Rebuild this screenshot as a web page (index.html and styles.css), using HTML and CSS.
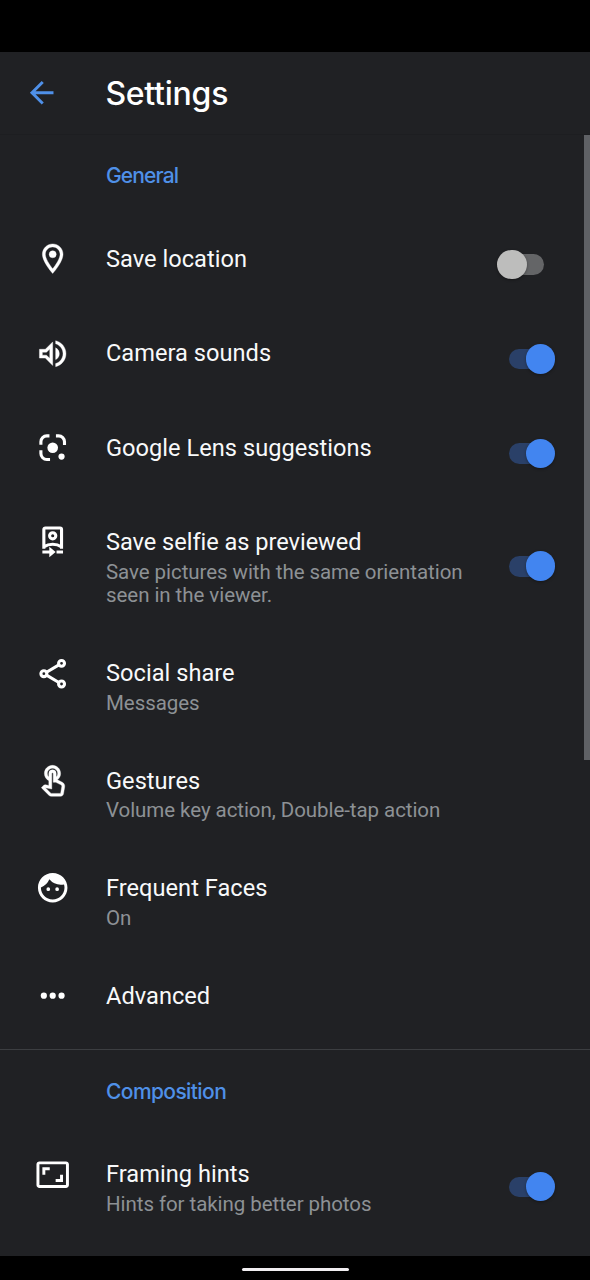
FILE: index.html
```html
<!DOCTYPE html>
<html lang="en">
<head>
<meta charset="utf-8">
<title>Settings</title>
<link rel="stylesheet" href="styles.css">
</head>
<body>
<div class="screen">
  <div class="status-bar"></div>
  <header class="app-bar">
    <svg class="icon back" viewBox="0 0 24 24"><path d="M20 11H7.83l5.59-5.59L12 4l-8 8 8 8 1.41-1.41L7.83 13H20v-2z"/></svg>
    <h1 class="page-title">Settings</h1>
  </header>
  <main class="list">
    <h2 class="category general">General</h2>
    <div class="row">
      <svg class="icon bold" viewBox="0 0 24 24"><path d="M12 2C8.13 2 5 5.13 5 9c0 5.25 7 13 7 13s7-7.75 7-13c0-3.87-3.13-7-7-7zM7 9c0-2.76 2.24-5 5-5s5 2.24 5 5c0 2.88-2.88 7.19-5 9.88C9.92 16.21 7 11.85 7 9z"/><circle cx="12" cy="9" r="2.4"/></svg>
      <div class="text"><div class="title">Save location</div></div>
      <div class="switch"></div>
    </div>
    <div class="row">
      <svg class="icon bold" viewBox="0 0 24 24"><path d="M3 9v6h4l5 5V4L7 9H3zm7-.17v6.34L7.83 13H5v-2h2.83L10 8.83zM16.5 12A4.5 4.5 0 0 0 14 7.97v8.05c1.48-.73 2.5-2.25 2.5-4.02zM14 3.23v2.06c2.89.86 5 3.54 5 6.71s-2.11 5.85-5 6.71v2.06c4.01-.91 7-4.49 7-8.77s-2.99-7.86-7-8.77z"/></svg>
      <div class="text"><div class="title">Camera sounds</div></div>
      <div class="switch on"></div>
    </div>
    <div class="row">
      <svg class="icon" viewBox="0 0 24 24"><path class="stroke" d="M9.8 4H8a4 4 0 0 0-4 4v2M14.2 4H16a4 4 0 0 1 4 4v2.2M4 13.8V16a4 4 0 0 0 4 4h2.2"/><circle cx="12" cy="12" r="3.6"/><circle cx="18" cy="18" r="2.1"/></svg>
      <div class="text"><div class="title">Google Lens suggestions</div></div>
      <div class="switch on"></div>
    </div>
    <div class="row">
      <svg class="icon" viewBox="0 0 24 24"><path class="stroke" d="M6 16.7V3.7a1 1 0 0 1 1-1h10a1 1 0 0 1 1 1v13M6.2 15.5c3.2-2.3 8.4-2.3 11.6 0"/><circle class="stroke" cx="12" cy="8" r="2.1"/><path d="M5 18h4.7v-2.6l4.3 3.6-4.3 3.6V20H5zM14.6 18H19v2h-4.4z"/></svg>
      <div class="text"><div class="title selfie">Save selfie as previewed</div><div class="sub">Save pictures with the same orientation<br>seen in the viewer.</div></div>
      <div class="switch on"></div>
    </div>
    <div class="row">
      <svg class="icon" viewBox="0 0 24 24"><path class="stroke" d="M7.8 11l8.4-5M7.8 13l8.4 5"/><g class="stroke"><circle cx="6" cy="12" r="2"/><circle cx="18" cy="5" r="2"/><circle cx="18" cy="19" r="2"/></g></svg>
      <div class="text"><div class="title">Social share</div><div class="sub">Messages</div></div>
    </div>
    <div class="row">
      <svg class="icon bold" viewBox="-0.3 -0.6 24 24"><path d="M18.19 12.44l-3.24-1.62c1.29-1 2.12-2.56 2.12-4.32 0-3.03-2.47-5.5-5.5-5.5s-5.5 2.47-5.5 5.5c0 2.13 1.22 3.98 3 4.89v3.26l-2.15-.46-.26-.02c-.53 0-1.03.21-1.41.59L4 16.18l5.09 5.09c.43.46 1.04.73 1.67.73h6.3c.98 0 1.81-.7 1.97-1.67l.8-4.71c.22-1.3-.43-2.58-1.64-3.18zm-.33 2.85l-.8 4.71h-6.3a.49.49 0 0 1-.35-.15l-3.7-3.7 4.36.92V6.5c0-.28.22-.5.5-.5s.5.22.5.5v6h1.76l3.46 1.73c.4.2.62.63.57 1.06zM8.07 6.5c0-1.93 1.57-3.5 3.5-3.5s3.5 1.57 3.5 3.5c0 .95-.38 1.81-1 2.44V6.5a2.5 2.5 0 0 0-5 0v2.44c-.62-.63-1-1.49-1-2.44z"/></svg>
      <div class="text"><div class="title">Gestures</div><div class="sub">Volume key action, Double-tap action</div></div>
    </div>
    <div class="row">
      <svg class="icon" viewBox="0 0 24 24"><path d="M10.25 13a1.25 1.25 0 1 1-2.5 0 1.25 1.25 0 0 1 2.5 0zM15 11.75a1.25 1.25 0 1 0 0 2.5 1.25 1.25 0 0 0 0-2.5zM22 12c0 5.52-4.48 10-10 10S2 17.52 2 12 6.48 2 12 2s10 4.48 10 10zm-2 0c0-.78-.12-1.53-.33-2.24-.7.15-1.42.24-2.17.24a10 10 0 0 1-7.76-3.69A10.02 10.02 0 0 1 4 11.86V12c0 4.41 3.59 8 8 8s8-3.59 8-8z"/></svg>
      <div class="text"><div class="title">Frequent Faces</div><div class="sub">On</div></div>
    </div>
    <div class="row">
      <svg class="icon" viewBox="0 0 24 24"><circle cx="6" cy="12" r="2.1"/><circle cx="12" cy="12" r="2.1"/><circle cx="18" cy="12" r="2.1"/></svg>
      <div class="text"><div class="title">Advanced</div></div>
    </div>
    <h2 class="category composition">Composition</h2>
    <div class="row">
      <svg class="icon" viewBox="0 0 24 24"><path d="M19 12h-2v3h-3v2h5v-5zM7 9h3V7H5v5h2V9zm14-6H3c-1.1 0-2 .9-2 2v14c0 1.1.9 2 2 2h18c1.1 0 2-.9 2-2V5c0-1.1-.9-2-2-2zm0 16.01H3V4.99h18v14.02z"/></svg>
      <div class="text"><div class="title">Framing hints</div><div class="sub">Hints for taking better photos</div></div>
      <div class="switch on"></div>
    </div>
    <div class="scrollbar"></div>
  </main>
  <footer class="nav-bar"><div class="handle"></div></footer>
</div>
</body>
</html>
```
FILE: styles.css
```css
* { box-sizing: border-box; }
body { margin: 0; background: #000; }
.screen {
  width: 590px;
  height: 1280px;
  display: flex;
  flex-direction: column;
  overflow: hidden;
  background: #202124;
  font-family: Roboto, sans-serif;
  color: #f8f9fa;
}
.status-bar { flex: none; height: 52px; background: #000; }
.app-bar {
  flex: none;
  height: 83px;
  display: flex;
  align-items: center;
  padding-left: 23.7px;
  border-bottom: 1px solid #1d1e21;
}
.icon {
  flex: none;
  width: 35.4px;
  height: 35.4px;
  fill: #fff;
}
.icon .stroke { fill: none; stroke: #fff; stroke-width: 2.1; }
.bold { stroke: #fff; stroke-width: 0.25; }
.back { fill: #4f90e8; }
.page-title {
  margin: 2px 0 0 46.3px;
  font: 500 32px/40px Inter, sans-serif;
  letter-spacing: -0.25px;
  color: #fff;
}
.list { position: relative; flex: 1; min-height: 0; overflow: hidden; }
.category {
  height: 82.45px;
  margin: 0;
  padding: 0 0 0 106px;
  font: 500 21px/82px Inter, sans-serif;
  letter-spacing: -0.6px;
  color: #4f90e8;
}
.general { letter-spacing: -0.85px; }
.composition { height: 84.4px; border-top: 1px solid #3c3e41; line-height: 84px; }
.row {
  display: flex;
  min-height: 94.4px;
  padding: 27.5px 34px 24.6px 35.3px;
}
.row .icon { margin-top: -3.7px; }
.text { flex: 1; margin-left: 35.3px; white-space: nowrap; }
.title { font-size: 23.6px; line-height: 28px; letter-spacing: 0.03px; }
.selfie { letter-spacing: -0.04px; }
.sub { margin: 4.6px 0 -0.8px; font-size: 20.5px; line-height: 23.6px; letter-spacing: -0.06px; color: #8d9195; }
.switch {
  position: relative;
  flex: none;
  align-self: center;
  width: 47px;
  height: 30px;
  margin: -22.6px 0 -20px;
}
.switch::before {
  content: "";
  position: absolute;
  left: 0;
  top: 4.7px;
  width: 34.5px;
  height: 20.6px;
  border-radius: 11px;
  background: #646567;
}
.switch::after {
  content: "";
  position: absolute;
  left: -12px;
  top: 0;
  width: 29.6px;
  height: 29.6px;
  border-radius: 50%;
  background: #bdbdbc;
  box-shadow: 0 1px 3px rgba(0, 0, 0, 0.35);
}
.switch.on::before { background: #2a4068; }
.switch.on::after { left: 16.5px; background: #4285f0; }
.scrollbar {
  position: absolute;
  top: 0;
  right: 0;
  width: 6px;
  height: 625px;
  background: #5f6165;
}
.nav-bar {
  flex: none;
  height: 24px;
  display: flex;
  justify-content: center;
  padding-top: 11.5px;
  background: #000;
}
.handle { width: 107px; height: 3.5px; border-radius: 2px; background: #f1eef1; }
```
